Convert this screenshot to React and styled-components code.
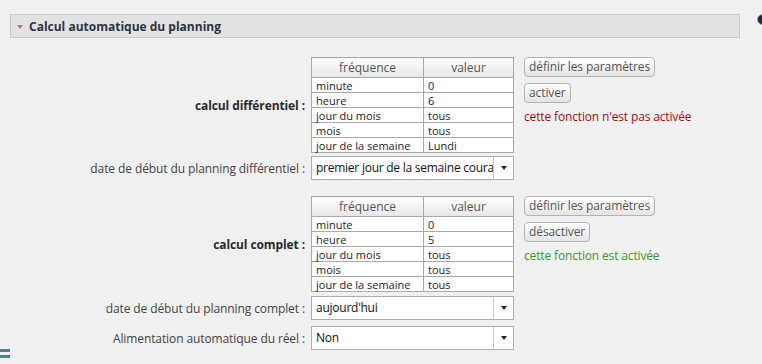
import React from "react";
import styled, { createGlobalStyle } from "styled-components";

const Global = createGlobalStyle`
  html, body { margin: 0; padding: 0; background: #f0f0f0; }
  body { font-family: "Open Sans", "Noto Sans", sans-serif; font-size: 12px; color: #333; }
`;

const Page = styled.div`
  position: relative;
  width: 762px;
  height: 364px;
  overflow: hidden;
  padding: 14px 0 0 10px;
  box-sizing: border-box;
`;

const SectionHeader = styled.div`
  width: 730px;
  height: 24px;
  box-sizing: border-box;
  border: 1px solid #c9c9c9;
  background: #e2e2e2;
  display: flex;
  align-items: center;
  gap: 6px;
  padding-left: 6px;
  font-weight: bold;
  font-size: 12px;
  color: #2d3440;
`;

const Caret = styled.span`
  width: 0;
  height: 0;
  border-left: 3.5px solid transparent;
  border-right: 3.5px solid transparent;
  border-top: 4px solid #888;
  margin-top: 1px;
`;

const Form = styled.div`
  display: grid;
  grid-template-columns: 295px 203px 1fr;
  column-gap: 6px;
  margin-top: 19px;
`;

const Label = styled.div`
  grid-column: 1;
  align-self: center;
  text-align: right;
  white-space: nowrap;
  letter-spacing: -0.1px;
  font-weight: ${(p) => (p.$bold ? "bold" : "normal")};
  color: ${(p) => (p.$bold ? "#2b2b2b" : "#444")};
  margin-top: ${(p) => p.$mt || 0}px;
`;

const Cell = styled.div`
  grid-column: 2;
  margin-top: ${(p) => p.$mt || 0}px;
`;

const Side = styled.div`
  grid-column: 3;
  margin-left: 4px;
  display: flex;
  flex-direction: column;
  align-items: flex-start;
  gap: 6px;
  margin-top: ${(p) => p.$mt || 0}px;
`;

const Table = styled.table`
  border-collapse: collapse;
  width: 203px;
  background: #fff;
  font-size: 11px;
  color: #222;
  th, td { border: 1px solid #a9a9a9; padding: 0 4px; }
  thead tr { height: 20px; }
  tbody tr { height: 15px; }
  th {
    font-weight: normal;
    color: #555;
    font-size: 12px;
    line-height: 16px;
    background: linear-gradient(#ffffff, #e6e6e6);
  }
  td { line-height: 12px; padding-top: 1px; }
  th:first-child, td:first-child { width: 103px; }
`;

const Button = styled.button`
  font-family: inherit;
  font-size: 12px;
  color: #555;
  height: 20px;
  padding: 0 4px;
  border: 1px solid #b3b3b3;
  border-radius: 4px;
  background: linear-gradient(#ffffff, #e4e4e4);
  line-height: 16px;
  letter-spacing: -0.1px;
`;

const Status = styled.div`
  color: ${(p) => (p.$on ? "#3c9a2c" : "#a80d0d")};
  margin-top: -1px;
  letter-spacing: -0.15px;
`;

const Select = styled.div`
  width: 203px;
  height: 24px;
  box-sizing: border-box;
  border: 1px solid #adadad;
  background: #fff;
  display: flex;
  color: #111;
  font-size: 12px;
`;

const SelectText = styled.div`
  flex: 1;
  overflow: hidden;
  white-space: nowrap;
  padding-left: 4px;
  line-height: 22px;
  letter-spacing: -0.25px;
`;

const Arrow = styled.div`
  width: 19px;
  border-left: 1px solid #c8c8c8;
  display: flex;
  align-items: center;
  justify-content: center;
  &::after {
    content: "";
    border-left: 3.5px solid transparent;
    border-right: 3.5px solid transparent;
    border-top: 4px solid #222;
  }
`;

const CornerIcon = styled.svg`
  position: absolute;
  left: 0;
  bottom: 4px;
`;

const EdgeIcon = styled.div`
  position: absolute;
  right: -6px;
  top: 14px;
  width: 9px;
  height: 9px;
  border-radius: 50%;
  background: #1d2a33;
  border: 1px solid #8aa;
`;

const rows1 = [
  ["minute", "0"],
  ["heure", "6"],
  ["jour du mois", "tous"],
  ["mois", "tous"],
  ["jour de la semaine", "Lundi"],
];
const rows2 = [
  ["minute", "0"],
  ["heure", "5"],
  ["jour du mois", "tous"],
  ["mois", "tous"],
  ["jour de la semaine", "tous"],
];

function FreqTable({ rows }) {
  return (
    <Table>
      <thead>
        <tr>
          <th>fréquence</th>
          <th>valeur</th>
        </tr>
      </thead>
      <tbody>
        {rows.map(([a, b]) => (
          <tr key={a}>
            <td>{a}</td>
            <td>{b}</td>
          </tr>
        ))}
      </tbody>
    </Table>
  );
}

function Dropdown({ value }) {
  return (
    <Select>
      <SelectText>{value}</SelectText>
      <Arrow />
    </Select>
  );
}

export default function App() {
  return (
    <>
      <Global />
      <Page>
        <SectionHeader>
          <Caret />
          Calcul automatique du planning
        </SectionHeader>
        <Form>
          <Label $bold>calcul différentiel :</Label>
          <Cell>
            <FreqTable rows={rows1} />
          </Cell>
          <Side>
            <Button>définir les paramètres</Button>
            <Button>activer</Button>
            <Status>cette fonction n'est pas activée</Status>
          </Side>

          <Label $mt={3}>date de début du planning différentiel :</Label>
          <Cell $mt={3}>
            <Dropdown value="premier jour de la semaine courante" />
          </Cell>

          <Label $bold $mt={16}>calcul complet :</Label>
          <Cell $mt={16}>
            <FreqTable rows={rows2} />
          </Cell>
          <Side $mt={16}>
            <Button>définir les paramètres</Button>
            <Button>désactiver</Button>
            <Status $on>cette fonction est activée</Status>
          </Side>

          <Label $mt={4}>date de début du planning complet :</Label>
          <Cell $mt={4}>
            <Dropdown value="aujourd'hui" />
          </Cell>

          <Label $mt={6}>Alimentation automatique du réel :</Label>
          <Cell $mt={6}>
            <Dropdown value="Non" />
          </Cell>
        </Form>
        <EdgeIcon />
        <CornerIcon width="10" height="12" viewBox="0 0 10 12">
          <rect x="0" y="1" width="10" height="3" fill="#4f8190" />
          <rect x="0" y="7" width="10" height="3" fill="#4f8190" />
        </CornerIcon>
      </Page>
    </>
  );
}
